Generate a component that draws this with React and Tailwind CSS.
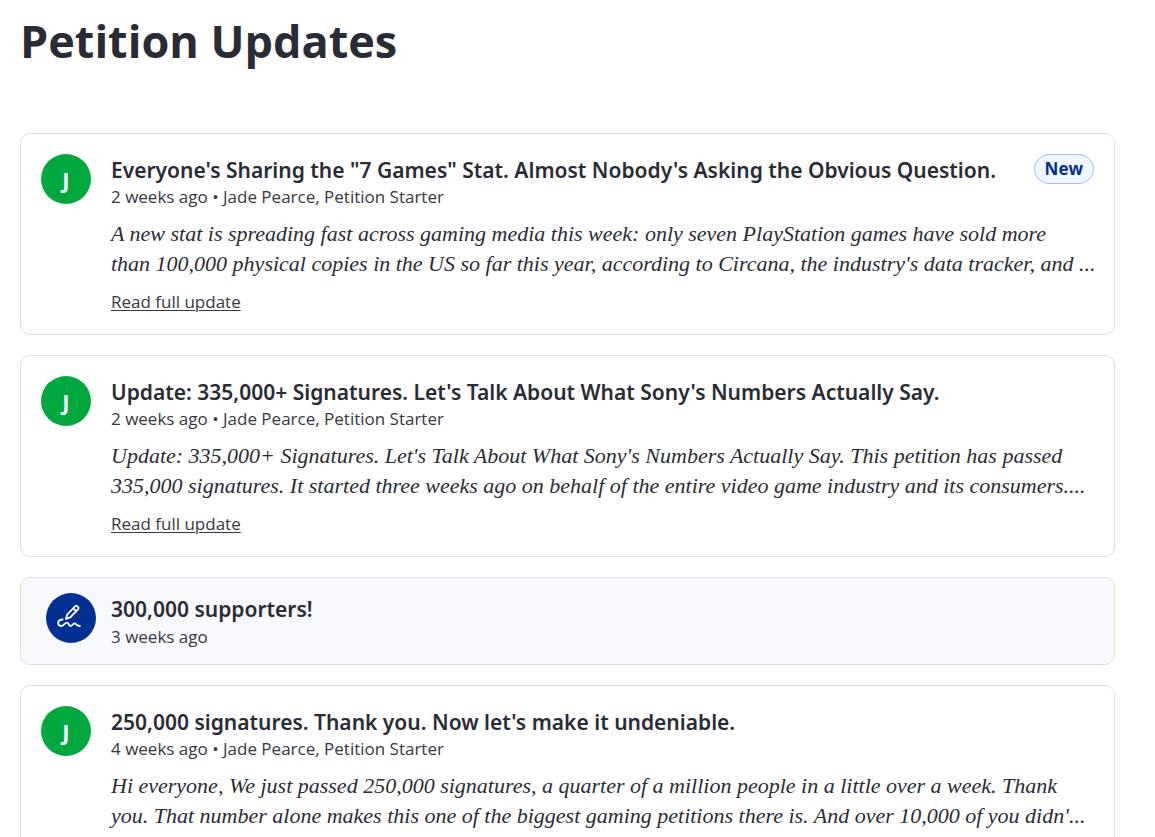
import React from 'react'

const updates = [
  {
    id: 1,
    type: 'update',
    title:
      'Everyone\'s Sharing the "7 Games" Stat. Almost Nobody\'s Asking the Obvious Question.',
    time: '2 weeks ago',
    author: 'Jade Pearce',
    isNew: true,
    lines: [
      'A new stat is spreading fast across gaming media this week: only seven PlayStation games have sold more',
      "than 100,000 physical copies in the US so far this year, according to Circana, the industry's data tracker, and ...",
    ],
  },
  {
    id: 2,
    type: 'update',
    title:
      "Update: 335,000+ Signatures. Let's Talk About What Sony's Numbers Actually Say.",
    time: '2 weeks ago',
    author: 'Jade Pearce',
    lines: [
      "Update: 335,000+ Signatures. Let's Talk About What Sony's Numbers Actually Say. This petition has passed",
      '335,000 signatures. It started three weeks ago on behalf of the entire video game industry and its consumers....',
    ],
  },
  {
    id: 3,
    type: 'milestone',
    title: '300,000 supporters!',
    time: '3 weeks ago',
  },
  {
    id: 4,
    type: 'update',
    title: "250,000 signatures. Thank you. Now let's make it undeniable.",
    time: '4 weeks ago',
    author: 'Jade Pearce',
    lines: [
      'Hi everyone, We just passed 250,000 signatures, a quarter of a million people in a little over a week. Thank',
      "you. That number alone makes this one of the biggest gaming petitions there is. And over 10,000 of you didn'...",
    ],
  },
]

const IconSign = () => (
  <svg
    viewBox="0 0 28 28"
    className="h-7 w-7"
    fill="none"
    stroke="currentColor"
    strokeWidth="1.8"
    strokeLinecap="round"
    strokeLinejoin="round"
    aria-hidden="true"
  >
    <path d="M8.900 14.900l1.300-4.200 7.700-8.200a1.900 1.900 0 0 1 2.700-.1l.3.3a1.900 1.900 0 0 1 .1 2.700l-7.900 8.100z" />
    <path d="M16.300 4.400l2.900 2.800" />
    <path d="M5.600 15.500c-2.600.2-4.400 1.600-4.400 3.600 0 1.800 1.300 2.900 3 2.900 2.700 0 3.600-3.300 5.700-3.300 2 0 1.700 3.300 3.900 3.300 1.900 0 2.100-2.700 3.700-2.700 1.700 0 1.900 2.700 5.400 2.700" />
  </svg>
)

const CardTitle = ({ children }) => (
  <h2 className="font-['Noto_Sans',sans-serif] text-[21px] leading-8 font-semibold">
    {children}
  </h2>
)

const UpdateCard = ({ item }) => (
  <article className="flex items-start gap-5 rounded-[10px] border border-[#dedfe3] bg-white p-5">
    <div className="flex h-[50px] w-[50px] shrink-0 items-center justify-center rounded-full bg-[#00a83e] text-[22px] font-bold text-white">
      {item.author[0]}
    </div>
    <div className="min-w-0 flex-1">
      <div className="flex items-start justify-between gap-4">
        <CardTitle>{item.title}</CardTitle>
        {item.isNew && (
          <span className="shrink-0 rounded-full border border-[#a9bbf2] bg-[#f0f6ff] px-2.5 text-[17px] leading-7 font-bold text-[#003192]">
            New
          </span>
        )}
      </div>
      <p className="text-[17px] leading-[22px] text-[#363840]">
        {item.time} • {item.author}, Petition Starter
      </p>
      <p className="mt-[11px] font-['Liberation_Serif',serif] text-[22px] leading-[30px] italic">
        {item.lines.map((line) => (
          <span key={line} className="block lg:whitespace-nowrap">
            {line}
          </span>
        ))}
      </p>
      <a
        href="#"
        className="mt-[11px] block w-fit text-[17px] leading-6 text-[#363840] underline underline-offset-2"
      >
        Read full update
      </a>
    </div>
  </article>
)

const MilestoneCard = ({ item }) => (
  <article className="flex items-start gap-[15px] rounded-[10px] border border-[#dadfe6] bg-[#f8f9fd] py-[15px] pr-5 pl-[25px]">
    <div className="flex h-[50px] w-[50px] shrink-0 items-center justify-center rounded-full bg-[#003192] text-white">
      <IconSign />
    </div>
    <div>
      <CardTitle>{item.title}</CardTitle>
      <p className="text-[17px] leading-6 text-[#363840]">{item.time}</p>
    </div>
  </article>
)

const App = () => {
  return (
    <main className="min-h-screen bg-white pr-10 pl-5 font-['Open_Sans',sans-serif] text-[#2a2c35]">
      <h1 className="pt-3 text-[45px] leading-[58px] font-bold">
        Petition Updates
      </h1>
      <div className="mt-[63px] flex flex-col gap-5">
        {updates.map((item) =>
          item.type === 'milestone' ? (
            <MilestoneCard key={item.id} item={item} />
          ) : (
            <UpdateCard key={item.id} item={item} />
          )
        )}
      </div>
    </main>
  )
}

export default App
